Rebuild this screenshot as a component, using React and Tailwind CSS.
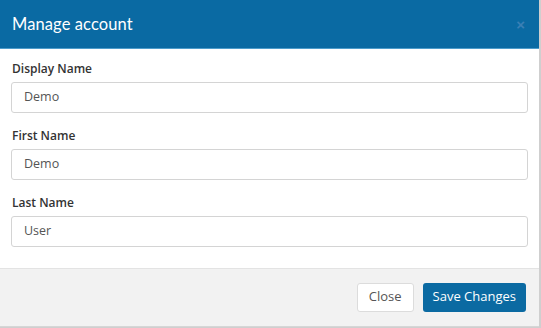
export default function App() {
  const fields = [
    { label: "Display Name", value: "Demo" },
    { label: "First Name", value: "Demo" },
    { label: "Last Name", value: "User" },
  ];
  return (
    <div className="w-[541px] h-[328px] bg-[#cfcfcf] overflow-hidden">
      <div className="w-[539px] h-[327px] bg-white flex flex-col border-b border-[#d6d6d6]">
        <div className="h-[49px] shrink-0 bg-[#0a6aa3] border-b border-[#4d9ccb] flex items-center justify-between pl-[12px] pr-[14px]">
          <span className="text-white text-[16.5px] tracking-[0.1px]" style={{ fontFamily: "Lato, 'Open Sans', sans-serif" }}>
            Manage account
          </span>
          <span className="text-[#3a80b5] text-[15px] leading-none font-bold" style={{ fontFamily: "Arial, sans-serif" }}>×</span>
        </div>
        <div className="flex-1 px-[11px] pt-[11px]" style={{ fontFamily: "'Open Sans', sans-serif" }}>
          {fields.map((f) => (
            <div key={f.label} className="mb-[14px]">
              <div className="text-[12px] font-semibold text-[#333] h-[17px] leading-[17px] pl-[1px] mb-[5px]">{f.label}</div>
              <div className="h-[31px] border border-[#d4d4d4] rounded-[3px] flex items-center pl-[12px] text-[12.5px] text-[#555]">
                {f.value}
              </div>
            </div>
          ))}
        </div>
        <div className="h-[58px] shrink-0 bg-[#f2f2f2] border-t border-[#e3e3e3] flex items-center justify-end gap-[9px] pr-[13px] pb-[1px]" style={{ fontFamily: "'Open Sans', sans-serif" }}>
          <div className="h-[29px] px-[11px] bg-white border border-[#dcdcdc] rounded-[3px] flex items-center text-[13px] text-[#555]">Close</div>
          <div className="h-[29px] px-[10px] bg-[#0b6aa2] rounded-[3px] flex items-center text-[13px] text-white">Save Changes</div>
        </div>
      </div>
    </div>
  );
}
